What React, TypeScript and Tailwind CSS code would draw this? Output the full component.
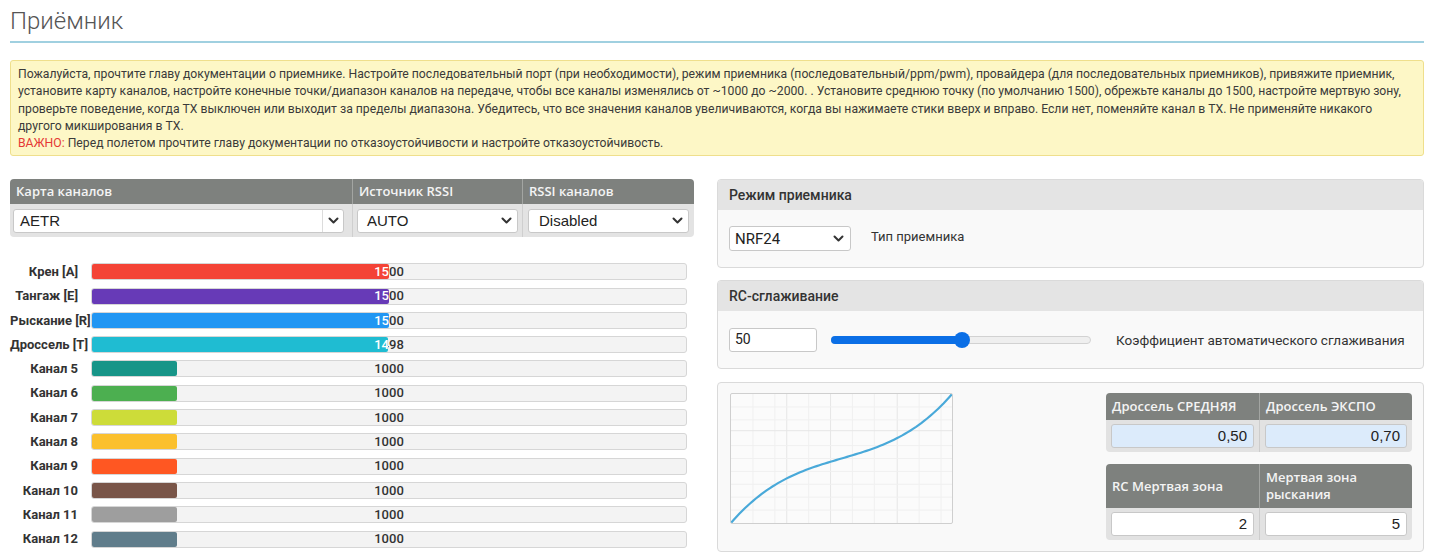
import React from 'react';

const channels = [
    { label: 'Крен [A]', value: 1500, color: 'bg-[#f44336]' },
    { label: 'Тангаж [E]', value: 1500, color: 'bg-[#673ab7]' },
    { label: 'Рыскание [R]', value: 1500, color: 'bg-[#2196f3]' },
    { label: 'Дроссель [T]', value: 1498, color: 'bg-[#1fbcd2]' },
    { label: 'Канал 5', value: 1000, color: 'bg-[#179588]' },
    { label: 'Канал 6', value: 1000, color: 'bg-[#4caf50]' },
    { label: 'Канал 7', value: 1000, color: 'bg-[#cddc39]' },
    { label: 'Канал 8', value: 1000, color: 'bg-[#fbc02d]' },
    { label: 'Канал 9', value: 1000, color: 'bg-[#ff5722]' },
    { label: 'Канал 10', value: 1000, color: 'bg-[#795548]' },
    { label: 'Канал 11', value: 1000, color: 'bg-[#9e9e9e]' },
    { label: 'Канал 12', value: 1000, color: 'bg-[#607d8b]' },
];

const noticeLines = [
    'Пожалуйста, прочтите главу документации о приемнике. Настройте последовательный порт (при необходимости), режим приемника (последовательный/ppm/pwm), провайдера (для последовательных приемников), привяжите приемник,',
    'установите карту каналов, настройте конечные точки/диапазон каналов на передаче, чтобы все каналы изменялись от ~1000 до ~2000. . Установите среднюю точку (по умолчанию 1500), обрежьте каналы до 1500, настройте мертвую зону,',
    'проверьте поведение, когда TX выключен или выходит за пределы диапазона. Убедитесь, что все значения каналов увеличиваются, когда вы нажимаете стики вверх и вправо. Если нет, поменяйте канал в TX. Не применяйте никакого',
    'другого микширования в TX.',
];

const Chevron = () => (
    <svg width="11" height="7" viewBox="0 0 11 7" fill="none">
        <polyline points="1.5,1.5 5.5,5.5 9.5,1.5" stroke="#333" strokeWidth="2" strokeLinecap="round" strokeLinejoin="round" />
    </svg>
);

const Select = ({ value, pad = 'pl-[9px]', divider = false, className = '' }: { value: string; pad?: string; divider?: boolean; className?: string }) => (
    <div className={`h-[24px] bg-white border border-[#c8c8c8] rounded-[3px] flex items-center ${className}`}>
        <span className={`flex-1 ${pad} text-[15px] leading-none text-[#222] font-['Liberation_Sans',Arial,sans-serif]`}>{value}</span>
        <span className={`w-[21px] h-full flex items-center justify-center ${divider ? 'border-l border-[#dcdcdc]' : ''}`}>
            <Chevron />
        </span>
    </div>
);

const ChannelBar = ({ label, value, color }: { label: string; value: number; color: string }) => {
    const pct = ((value - 800) / 1400) * 100;
    return (
        <div className="flex items-center h-[17px]">
            <div className="w-[68px] shrink-0 text-right whitespace-nowrap text-[13px] font-bold text-[#333]">{label}</div>
            <div className="relative ml-[13px] mr-[7px] flex-1 h-[17px] bg-[#f3f3f3] border border-[#d6d6d6] rounded-[3px] overflow-hidden">
                <div className="absolute inset-0 flex items-center justify-center text-[13px] font-medium text-[#333]">{value}</div>
                <div className={`absolute left-0 top-0 bottom-0 overflow-hidden rounded-r-[2px] ${color}`} style={{ width: `${pct}%` }}>
                    <div className="absolute left-0 top-0 bottom-0 w-[594px] flex items-center justify-center text-[13px] font-medium text-white">{value}</div>
                </div>
            </div>
        </div>
    );
};

const Panel = ({ title, children }: { title: string; children: React.ReactNode }) => (
    <div className="border border-[#dadada] rounded-[4px] overflow-hidden bg-[#f9f9f9]">
        <div className="h-[30px] px-[11px] flex items-center bg-[#e4e4e4] text-[14px] font-medium text-[#333]">{title}</div>
        <div className="h-[57px] px-[11px] flex items-center">{children}</div>
    </div>
);

const ThrottleCurve = () => {
    // throttle mid 0.5 / expo curve, drawn in a 222x130 box
    const mid = 0.5;
    const expo = 0.5;
    const pts: string[] = [];
    for (let i = 0; i <= 80; i++) {
        const x = i / 80;
        const tmp = x - mid;
        const out = mid + tmp * (1 - expo + expo * tmp * tmp * 4);
        pts.push(`${(x * 222).toFixed(2)},${(130 - out * 130).toFixed(2)}`);
    }
    const vx = [22, 44, 56, 78, 100, 122, 144, 167, 189, 211];
    const hy = [13, 26, 37, 52, 65, 78, 91, 104, 117];
    return (
        <div className="w-[223px] h-[131px] border border-[#cfcfcf] rounded-[2px] bg-[#fbfbfb] overflow-hidden">
            <svg width="221" height="129" viewBox="0 0 222 130" preserveAspectRatio="none">
                {vx.map((x) => (
                    <line key={`v${x}`} x1={x} y1="0" x2={x} y2="130" stroke={x === 56 || x === 100 || x === 167 ? '#e6e6e6' : '#f0f0f0'} strokeWidth="1" />
                ))}
                {hy.map((y) => (
                    <line key={`h${y}`} x1="0" y1={y} x2="222" y2={y} stroke={y === 37 ? '#e6e6e6' : '#f0f0f0'} strokeWidth="1" />
                ))}
                <polyline points={pts.join(' ')} fill="none" stroke="#49a9d9" strokeWidth="2.2" strokeLinejoin="round" />
            </svg>
        </div>
    );
};

const NumInput = ({ value, blue = false }: { value: string; blue?: boolean }) => (
    <div className={`h-[24px] w-full border border-[#c8c8c8] rounded-[3px] flex items-center justify-end pr-[6px] text-[15px] text-[#222] font-['Liberation_Sans',Arial,sans-serif] ${blue ? 'bg-[#dcebfb]' : 'bg-white'}`}>
        {value}
    </div>
);

const CurveTable = ({ headers, values, blue, headerH }: { headers: string[]; values: string[]; blue: boolean; headerH: string }) => (
    <div className="w-[306px] rounded-[4px] overflow-hidden">
        <div className={`grid grid-cols-2 bg-[#7e817e] ${headerH}`}>
            {headers.map((h, i) => (
                <div key={h} className={`px-[6px] flex items-center text-[13px] leading-[17px] font-semibold text-[#f4f4f4] font-['Open_Sans',sans-serif] ${i ? 'border-l border-[#a3a5a2]' : ''}`}>{h}</div>
            ))}
        </div>
        <div className="grid grid-cols-2 bg-[#e2e2e2] h-[32px]">
            {values.map((v, i) => (
                <div key={i} className={`px-[5px] flex items-center ${i ? 'border-l border-[#cdcdcd]' : ''}`}>
                    <NumInput value={v} blue={blue} />
                </div>
            ))}
        </div>
    </div>
);

export default function App() {
    return (
        <div className="h-[554px] overflow-hidden bg-white pl-[10px] pr-[16px] text-[#333] font-['Roboto',sans-serif]">
            <h1 className="pt-[7px] pb-[6px] border-b-2 border-[#a0d0e0] text-[24px] leading-[28px] font-light text-[#555]">Приёмник</h1>

            <div className="mt-[17px] bg-[#fdf7c6] border border-[#efdf8c] rounded-[3px] pl-[7px] pr-[6px] pt-[5px] pb-[3px] text-[12.2px] leading-[17.25px] text-[#3a3a3a]">
                {noticeLines.map((l) => (
                    <div key={l} className="whitespace-nowrap">{l}</div>
                ))}
                <div className="whitespace-nowrap">
                    <span className="text-[#e53935]">ВАЖНО:</span> Перед полетом прочтите главу документации по отказоустойчивости и настройте отказоустойчивость.
                </div>
            </div>

            <div className="mt-[23px] flex">
                <div className="w-[684px] shrink-0">
                    <div className="rounded-[4px] overflow-hidden">
                        <div className="grid grid-cols-[342px_170px_172px] h-[25px] bg-[#7e817e] text-[13px] font-semibold text-[#f4f4f4] font-['Open_Sans',sans-serif]">
                            <div className="pl-[6px] flex items-center">Карта каналов</div>
                            <div className="pl-[6px] flex items-center border-l border-[#a3a5a2]">Источник RSSI</div>
                            <div className="pl-[6px] flex items-center border-l border-[#a3a5a2]">RSSI каналов</div>
                        </div>
                        <div className="grid grid-cols-[342px_170px_172px] h-[33px] bg-[#e3e3e3]">
                            <div className="pl-[3px] pr-[8px] flex items-center">
                                <Select value="AETR" pad="pl-[6px]" divider className="w-full" />
                            </div>
                            <div className="pl-[4px] pr-[4px] flex items-center border-l border-[#cfcfcf]">
                                <Select value="AUTO" className="w-full" />
                            </div>
                            <div className="pl-[5px] pr-[5px] flex items-center border-l border-[#cfcfcf]">
                                <Select value="Disabled" pad="pl-[10px]" className="w-full" />
                            </div>
                        </div>
                    </div>

                    <div className="mt-[26px] flex flex-col gap-[7.3px]">
                        {channels.map((c) => (
                            <ChannelBar key={c.label} {...c} />
                        ))}
                    </div>
                </div>

                <div className="ml-[23px] flex-1 flex flex-col">
                    <Panel title="Режим приемника">
                        <div className="w-[122px] h-[25px] bg-white border border-[#c8c8c8] rounded-[3px] flex items-center">
                            <span className="flex-1 pl-[5px] text-[15px] text-[#222]">NRF24</span>
                            <span className="w-[24px] flex justify-center"><Chevron /></span>
                        </div>
                        <span className="ml-[20px] -mt-[4px] text-[13px] text-[#333]">Тип приемника</span>
                    </Panel>

                    <div className="mt-[12px]">
                        <Panel title="RC-сглаживание">
                            <div className="w-[88px] h-[24px] bg-white border border-[#c8c8c8] rounded-[3px] flex items-center pl-[5px] text-[14px] text-[#222]">50</div>
                            <div className="ml-[14px] relative w-[260px] h-[8px] rounded-full bg-[#efefef] border border-[#d2d2d2]">
                                <div className="absolute -left-px -top-px h-[8px] w-[131px] rounded-full bg-[#0b6fe6]" />
                                <div className="absolute left-[122px] top-[-5px] w-[16px] h-[16px] rounded-full bg-[#0b6fe6]" />
                            </div>
                            <span className="ml-[25px] text-[13.5px] text-[#333]">Коэффициент автоматического сглаживания</span>
                        </Panel>
                    </div>

                    <div className="mt-[13px] h-[170px] border border-[#dadada] rounded-[4px] bg-[#f9f9f9] pl-[12px] pr-[11px] pt-[10px] flex justify-between">
                        <ThrottleCurve />
                        <div className="flex flex-col gap-[12px]">
                            <CurveTable headers={['Дроссель СРЕДНЯЯ', 'Дроссель ЭКСПО']} values={['0,50', '0,70']} blue headerH="h-[27px]" />
                            <CurveTable headers={['RC Мертвая зона', 'Мертвая зона рыскания']} values={['2', '5']} blue={false} headerH="h-[44px]" />
                        </div>
                    </div>
                </div>
            </div>
        </div>
    );
}
